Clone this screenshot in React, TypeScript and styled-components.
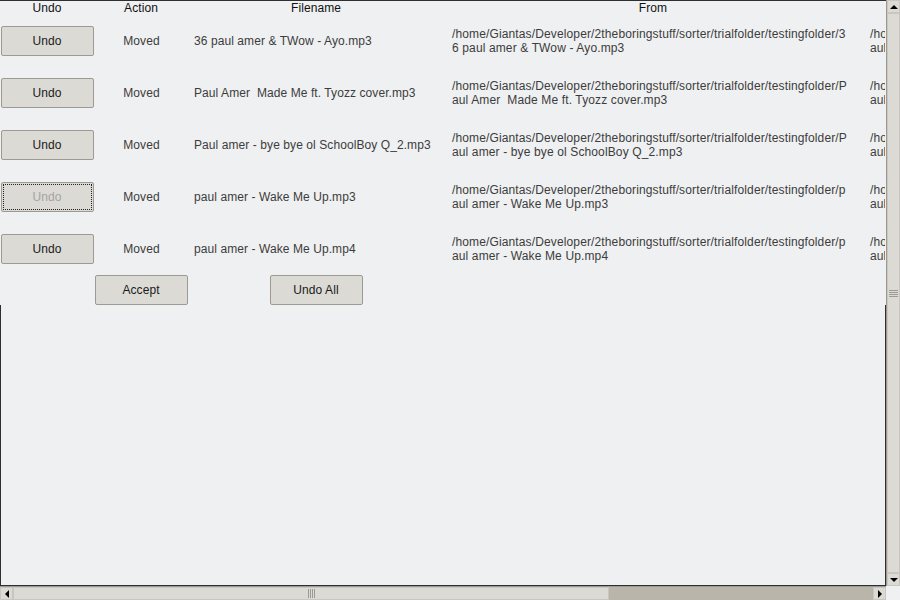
import React from 'react';
import styled, { createGlobalStyle } from 'styled-components';

const GlobalStyle = createGlobalStyle`
  html, body {
    margin: 0;
    padding: 0;
    background: #eff0f1;
    font-family: 'Liberation Sans', Arial, sans-serif;
    font-size: 12px;
  }
`;

const Window = styled.div`
  display: grid;
  grid-template-columns: 886px 14px;
  grid-template-rows: 586px 14px;
  width: 900px;
  height: 600px;
  background: #eff0f1;
  overflow: hidden;
`;

const Canvas = styled.div`
  display: flex;
  flex-direction: column;
  border-top: 1px solid #2f2f2f;
  border-bottom: 1px solid #2f2f2f;
  overflow: hidden;
  box-sizing: border-box;
`;

const Table = styled.div`
  display: grid;
  grid-template-columns: 94px 94px 256px 418px 1fr;
  grid-template-rows: 14px repeat(5, 52px) 30px;
  width: 885px;
  overflow: hidden;
  background: #eff0f1;
  letter-spacing: 0.08px;
`;

const Filler = styled.div`
  flex: 1;
  border-left: 1px solid #2f2f2f;
  border-right: 1px solid #2f2f2f;
  width: 886px;
  box-sizing: border-box;
`;

const HeaderCell = styled.div`
  display: flex;
  align-items: center;
  justify-content: center;
  color: #111;
  line-height: 14px;
  white-space: nowrap;
`;

const Cell = styled.div<{ $center?: boolean }>`
  display: flex;
  align-items: center;
  justify-content: ${({ $center }) => ($center ? 'center' : 'flex-start')};
  padding-left: ${({ $center }) => ($center ? '1px' : '6px')};
  color: #3c3c3c;
  white-space: pre;
  overflow: hidden;
`;

const PathCell = styled.div<{ $indent?: number }>`
  display: flex;
  flex-direction: column;
  justify-content: center;
  padding-left: ${({ $indent }) => $indent ?? 8}px;
  color: #3c3c3c;
  line-height: 14px;
  letter-spacing: 0.13px;
  white-space: pre;
  overflow: hidden;
`;

const ButtonCell = styled.div<{ $col?: string }>`
  display: flex;
  align-items: center;
  justify-content: center;
  grid-column: ${({ $col }) => $col ?? 'auto'};
`;

const ToolButton = styled.button`
  width: 93px;
  height: 30px;
  margin: 0;
  padding: 0;
  background: #dcdad5;
  border: 1px solid #9d9a94;
  border-radius: 2px;
  font-family: 'Liberation Sans', Arial, sans-serif;
  font-size: 12px;
  letter-spacing: 0.08px;
  color: #1a1a1a;
  box-sizing: border-box;

  &:disabled {
    color: #a4a4a4;
    outline: 1px dotted #222;
    outline-offset: -3px;
  }
`;

const VScroll = styled.div`
  display: flex;
  flex-direction: column;
  background: #dcdad5;
  border-left: 1px solid #9d9a94;
  box-sizing: border-box;
`;

const HScroll = styled.div`
  display: flex;
  background: #bab5ab;
  border-top: 1px solid #9d9a94;
  box-sizing: border-box;
`;

const ArrowButton = styled.div`
  flex: 0 0 13px;
  width: 13px;
  height: 13px;
  display: flex;
  align-items: center;
  justify-content: center;
  background: #dcdad5;
  border: 1px solid #c9c6bf;
  box-sizing: border-box;
`;

const Thumb = styled.div<{ $vertical?: boolean }>`
  display: flex;
  align-items: center;
  justify-content: center;
  background: #dcdad5;
  border: 1px solid #c9c6bf;
  box-sizing: border-box;
  flex: ${({ $vertical }) => ($vertical ? '1' : '0 0 596px')};
  flex-direction: ${({ $vertical }) => ($vertical ? 'column' : 'row')};
  gap: 1px;
`;

const Trough = styled.div`
  flex: 1;
  background: #bab5ab;
`;

const Grip = styled.span<{ $vertical?: boolean }>`
  display: block;
  background: #9d9a94;
  width: ${({ $vertical }) => ($vertical ? '9px' : '1px')};
  height: ${({ $vertical }) => ($vertical ? '1px' : '9px')};
`;

const Corner = styled.div`
  background: #eff0f1;
`;

type Dir = 'up' | 'down' | 'left' | 'right';

function Arrow({ dir }: { dir: Dir }) {
  const pts: Record<Dir, string> = {
    up: '0,6 4,2 8,6',
    down: '0,2 4,6 8,2',
    left: '6,0 2,4 6,8',
    right: '2,0 6,4 2,8',
  };
  return (
    <svg width="8" height="8" viewBox="0 0 8 8">
      <polygon points={pts[dir]} fill="#000" />
    </svg>
  );
}

const base = '/home/Giantas/Developer/2theboringstuff/sorter/trialfolder/testingfolder/';

const rows = [
  { name: '36 paul amer & TWow - Ayo.mp3', from: [base + '3', '6 paul amer & TWow - Ayo.mp3'] },
  { name: 'Paul Amer  Made Me ft. Tyozz cover.mp3', from: [base + 'P', 'aul Amer  Made Me ft. Tyozz cover.mp3'] },
  { name: 'Paul amer - bye bye ol SchoolBoy Q_2.mp3', from: [base + 'P', 'aul amer - bye bye ol SchoolBoy Q_2.mp3'] },
  { name: 'paul amer - Wake Me Up.mp3', from: [base + 'p', 'aul amer - Wake Me Up.mp3'], disabled: true },
  { name: 'paul amer - Wake Me Up.mp4', from: [base + 'p', 'aul amer - Wake Me Up.mp4'] },
];

function Grips({ vertical }: { vertical?: boolean }) {
  return (
    <>
      {[0, 1, 2, 3].map((i) => (
        <Grip key={i} $vertical={vertical} />
      ))}
    </>
  );
}

export default function App() {
  return (
    <Window>
      <GlobalStyle />
      <Canvas>
        <Table>
          <HeaderCell>Undo</HeaderCell>
          <HeaderCell>Action</HeaderCell>
          <HeaderCell>Filename</HeaderCell>
          <HeaderCell>From</HeaderCell>
          <HeaderCell />
          {rows.map((r) => (
            <React.Fragment key={r.name}>
              <ButtonCell>
                <ToolButton disabled={r.disabled}>Undo</ToolButton>
              </ButtonCell>
              <Cell $center>Moved</Cell>
              <Cell>{r.name}</Cell>
              <PathCell>
                <span>{r.from[0]}</span>
                <span>{r.from[1]}</span>
              </PathCell>
              <PathCell $indent={8}>
                <span>/home/Giantas/Developer/2theboringstuff/sorter/trialfolder/</span>
                <span>aul amer</span>
              </PathCell>
            </React.Fragment>
          ))}
          <ButtonCell $col="2">
            <ToolButton>Accept</ToolButton>
          </ButtonCell>
          <ButtonCell $col="3">
            <ToolButton>Undo All</ToolButton>
          </ButtonCell>
        </Table>
        <Filler />
      </Canvas>
      <VScroll>
        <ArrowButton>
          <Arrow dir="up" />
        </ArrowButton>
        <Thumb $vertical>
          <Grips vertical />
        </Thumb>
        <ArrowButton>
          <Arrow dir="down" />
        </ArrowButton>
      </VScroll>
      <HScroll>
        <ArrowButton>
          <Arrow dir="left" />
        </ArrowButton>
        <Thumb>
          <Grips />
        </Thumb>
        <Trough />
        <ArrowButton>
          <Arrow dir="right" />
        </ArrowButton>
      </HScroll>
      <Corner />
    </Window>
  );
}
